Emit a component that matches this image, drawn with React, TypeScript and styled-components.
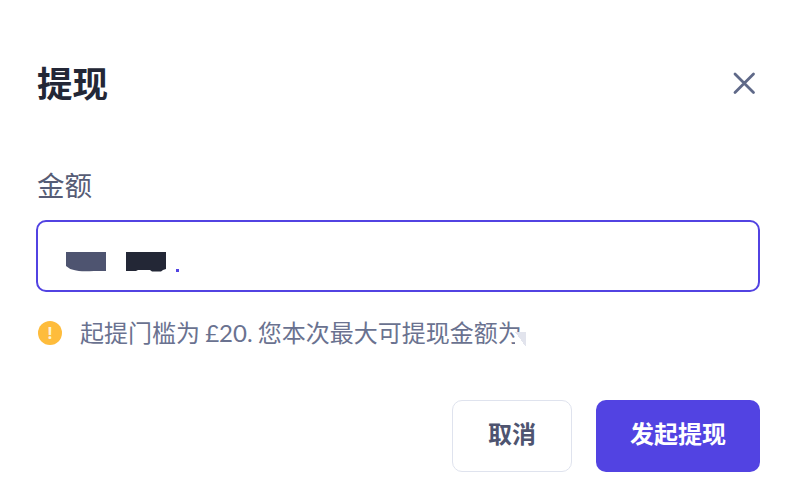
import React from 'react';
import styled, { createGlobalStyle } from 'styled-components';

const GlobalStyle = createGlobalStyle`
  html, body {
    margin: 0;
    padding: 0;
    background: #fff;
  }
  body {
    font-family: Lato, "Noto Sans CJK SC", sans-serif;
    overflow: hidden;
  }
`;

const App = () => {
  return (
    <>
      <GlobalStyle />
      <Dialog>
        <Header>
          <Title>提现</Title>
          <CloseButton aria-label="close">
            <svg width="24" height="24" viewBox="0 0 24 24" fill="none">
              <path d="M3 2 L21.5 20.5 M21.5 2 L3 20.5" stroke="#5f6988" strokeWidth="2.8" strokeLinecap="round" />
            </svg>
          </CloseButton>
        </Header>

        <Label>金额</Label>
        <AmountField>
          <AmountMask>
            <svg width="40" height="20" viewBox="0 0 40 20">
              <path d="M0 0 H40 V19 H28 Q14 20 8 18 Q3 17 0 14 Z" fill="#4e5470" />
            </svg>
            <svg width="40" height="20" viewBox="0 0 40 20">
              <path d="M0 0 H40 V17 L37 18 L35 19.5 H26 L24 18 H12 L10 19 H0 Z" fill="#232736" />
            </svg>
            <Caret />
          </AmountMask>
        </AmountField>

        <Hint>
          <WarnIcon>!</WarnIcon>
          <HintText>起提门槛为 £20. 您本次最大可提现金额为</HintText>
          <HintMask />
        </Hint>

        <Footer>
          <CancelButton>取消</CancelButton>
          <SubmitButton>发起提现</SubmitButton>
        </Footer>
      </Dialog>
    </>
  );
};
export default App;

const Dialog = styled.div`
  width: 795px;
  height: 480px;
  box-sizing: border-box;
  padding: 59px 35px 0 36px;
  display: flex;
  flex-direction: column;
  background: #fff;
`;

const Header = styled.div`
  display: flex;
  align-items: center;
  justify-content: space-between;
  height: 50px;
  padding-left: 1px;
`;

const Title = styled.h1`
  margin: 0;
  font-size: 35.5px;
  line-height: 50px;
  font-weight: 700;
  color: #232736;
`;

const CloseButton = styled.button`
  display: flex;
  width: 24px;
  height: 24px;
  margin-right: 4px;
  padding: 0;
  border: 0;
  background: none;
`;

const Label = styled.div`
  margin-top: 57px;
  padding-left: 1px;
  font-size: 27.5px;
  line-height: 40px;
  color: #565c75;
`;

const AmountField = styled.div`
  margin-top: 14px;
  height: 72px;
  box-sizing: border-box;
  border: 2px solid #5243e2;
  border-radius: 10px;
  display: flex;
  align-items: center;
  padding-left: 28px;
`;

const AmountMask = styled.div`
  display: flex;
  align-items: flex-start;
  gap: 20px;
  height: 20px;
  margin-top: 12px;
`;

const Caret = styled.span`
  width: 3px;
  height: 3px;
  margin: 17px 0 0 -10px;
  background: #5243e2;
`;

const Hint = styled.div`
  position: relative;
  display: flex;
  align-items: center;
  gap: 18px;
  margin-top: 23px;
  height: 36px;
  padding-left: 2px;
`;

const WarnIcon = styled.span`
  width: 24px;
  height: 24px;
  border-radius: 50%;
  background: #febc3c;
  color: #fff3d6;
  font-family: Inter, sans-serif;
  font-size: 16px;
  font-weight: 700;
  line-height: 24px;
  text-align: center;
`;

const HintText = styled.span`
  white-space: nowrap;
  font-size: 24px;
  line-height: 36px;
  word-spacing: -1px;
  color: #6a7290;
`;

const HintMask = styled.span`
  position: absolute;
  left: 479px;
  top: 17px;
  width: 11px;
  height: 15px;
  background: linear-gradient(to top right, #fff 50%, #e2e4ed 50%);
`;

const Footer = styled.div`
  display: flex;
  justify-content: flex-end;
  gap: 24px;
  margin-top: 49px;
`;

const FooterButton = styled.button`
  height: 72px;
  box-sizing: border-box;
  border-radius: 10px;
  padding: 0 0 8px;
  font-family: inherit;
  font-size: 24px;
  font-weight: 600;
`;

const CancelButton = styled(FooterButton)`
  width: 120px;
  border: 1px solid #dfe3ee;
  background: #fff;
  color: #4e5470;
`;

const SubmitButton = styled(FooterButton)`
  width: 164px;
  border: 0;
  background: #5243e2;
  color: #fff;
`;
